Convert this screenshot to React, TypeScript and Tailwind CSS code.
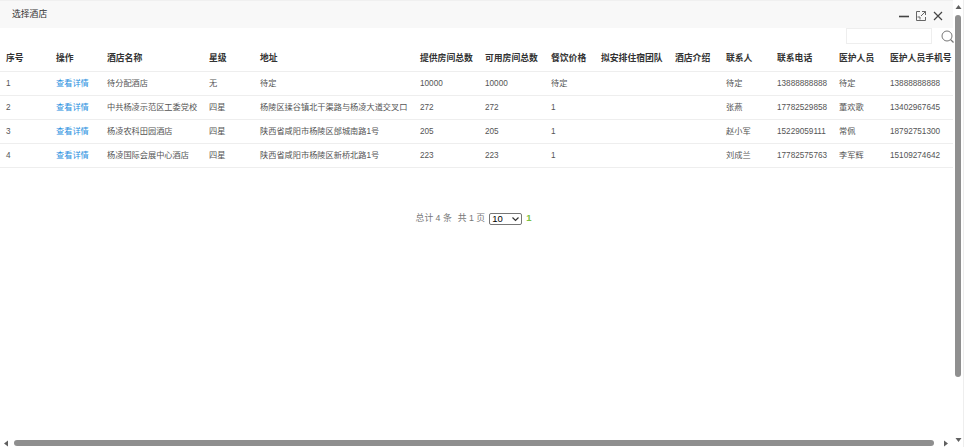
import React from "react";

const columns = [
  { title: "序号", width: 50 },
  { title: "操作", width: 51 },
  { title: "酒店名称", width: 102 },
  { title: "星级", width: 51 },
  { title: "地址", width: 160 },
  { title: "提供房间总数", width: 65 },
  { title: "可用房间总数", width: 66 },
  { title: "餐饮价格", width: 50 },
  { title: "拟安排住宿团队", width: 74 },
  { title: "酒店介绍", width: 51 },
  { title: "联系人", width: 51 },
  { title: "联系电话", width: 62 },
  { title: "医护人员", width: 51 },
  { title: "医护人员手机号", width: 69 },
];

const rows = [
  ["1", "待分配酒店", "无", "待定", "10000", "10000", "待定", "", "", "待定", "13888888888", "待定", "13888888888"],
  ["2", "中共杨凌示范区工委党校", "四星", "杨陵区揉谷镇北干渠路与杨凌大道交叉口", "272", "272", "1", "", "", "张燕", "17782529858", "董欢歌", "13402967645"],
  ["3", "杨凌农科田园酒店", "四星", "陕西省咸阳市杨陵区邰城南路1号", "205", "205", "1", "", "", "赵小军", "15229059111", "常佩", "18792751300"],
  ["4", "杨凌国际会展中心酒店", "四星", "陕西省咸阳市杨陵区新桥北路1号", "223", "223", "1", "", "", "刘成兰", "17782575763", "李军辉", "15109274642"],
];

function WindowIcons() {
  return (
    <div className="flex items-center gap-[7px] pt-[2px] text-[#444]">
      <svg width="10" height="10" viewBox="0 0 10 10">
        <path d="M0 5.5h10" stroke="currentColor" strokeWidth="1.6" />
      </svg>
      <svg width="10" height="10" viewBox="0 0 10 10" fill="none" stroke="#666" strokeWidth="1">
        <path d="M4 0.5H0.5V9.5H9.5V6" />
        <path d="M6 0.5h3.5V4" />
        <path d="M9.5 0.5L5 5" />
        <path d="M1.5 6h2.5V8.5" />
      </svg>
      <svg width="10" height="10" viewBox="0 0 10 10">
        <path d="M1 1l8 8M9 1l-8 8" stroke="currentColor" strokeWidth="1.2" />
      </svg>
    </div>
  );
}

export default function App() {
  return (
    <div
      className="flex h-[447px] w-[964px] overflow-hidden bg-white text-[#555]"
      style={{ fontFamily: '"Liberation Sans", "Noto Sans CJK SC", sans-serif' }}
    >
      <div className="flex w-[953px] flex-col">
        <div className="flex h-[28px] items-center justify-between border-t border-[#f0f0f0] bg-[#f8f8f8] pl-3 pr-[10px] text-[8.8px] text-[#333]">
          <span>选择酒店</span>
          <WindowIcons />
        </div>

        <div className="flex h-[16px] justify-end">
          <input className="mr-[21px] h-[16px] w-[86px] border border-[#eeeeee] bg-white outline-none" />
        </div>

        <table className="w-[953px] table-fixed border-collapse">
          <colgroup>
            {columns.map((c) => (
              <col key={c.title} style={{ width: c.width }} />
            ))}
          </colgroup>
          <thead>
            <tr className="h-[27px] border-b border-[#eeeeee]">
              {columns.map((c) => (
                <th key={c.title} className="whitespace-nowrap pl-[6px] pt-[2px] text-left text-[8.8px] font-bold text-[#333]">
                  {c.title}
                </th>
              ))}
            </tr>
          </thead>
          <tbody>
            {rows.map((r) => (
              <tr key={r[0]} className="h-[24px] border-b border-[#eeeeee] text-[8.2px]">
                <td className="pl-[6px] pt-[2px]">{r[0]}</td>
                <td className="pl-[6px] pt-[2px]">
                  <a className="text-[#2a8fe0]">查看详情</a>
                </td>
                {r.slice(1).map((v, i) => (
                  <td key={i} className="whitespace-nowrap pl-[6px] pt-[2px]">
                    {v}
                  </td>
                ))}
              </tr>
            ))}
          </tbody>
        </table>

        <div className="mt-[43px] flex h-[16px] items-center justify-center pr-[6px] text-[8.8px] text-[#777]">
          <span>总计 4 条</span>
          <span className="ml-[6px]">共 1 页</span>
          <div className="relative ml-[4px] h-[12px] w-[33px]">
            <select className="block h-[12px] w-[33px] appearance-none rounded-[2px] border border-[#767676] bg-white pl-[2px] text-[9.5px] leading-[10px] text-black">
              <option>10</option>
            </select>
            <svg width="7" height="5" viewBox="0 0 7 5" fill="none" stroke="#333" strokeWidth="1.2" className="absolute right-[3px] top-[4px]">
              <path d="M0.5 0.5L3.5 3.5L6.5 0.5" />
            </svg>
          </div>
          <span className="ml-[4px] text-[9.5px] font-bold text-[#7ac142]">1</span>
        </div>

        <div className="flex-1" />

        <div className="mb-[1px] flex h-[6px] items-center">
          <svg width="6" height="7" viewBox="0 0 6 7" className="ml-[3px]">
            <path d="M5 0.5v6L1 3.5z" fill="#606060" />
          </svg>
          <div className="ml-[5px] h-[6px] w-[920px] rounded-[3px] bg-[#8f8f8f]" />
          <svg width="6" height="7" viewBox="0 0 6 7" className="ml-[9px]">
            <path d="M1 0.5v6L5 3.5z" fill="#606060" />
          </svg>
        </div>
      </div>

      {/* right side: search icon sits over the scrollbar gutter edge */}
      <div className="relative flex w-[11px] flex-col items-center border-r border-[#eeeeee] pt-[4px]">
        <svg width="7" height="6" viewBox="0 0 7 6">
          <path d="M3.5 1L6.5 5H0.5z" fill="#606060" />
        </svg>
        <div className="mt-[5px] h-[362px] w-[6px] rounded-[3px] bg-[#8f8f8f]" />
        <div className="flex-1" />
        <svg width="7" height="6" viewBox="0 0 7 6" className="mb-[4px]">
          <path d="M3.5 5L6.5 1H0.5z" fill="#606060" />
        </svg>
        <svg
          width="13"
          height="13"
          viewBox="0 0 13 13"
          fill="none"
          stroke="#777"
          strokeWidth="1"
          className="absolute left-[-12px] top-[30px]"
        >
          <circle cx="6" cy="6" r="5" />
          <path d="M9.5 9.5l3 3" strokeWidth="1.3" />
        </svg>
      </div>
    </div>
  );
}
